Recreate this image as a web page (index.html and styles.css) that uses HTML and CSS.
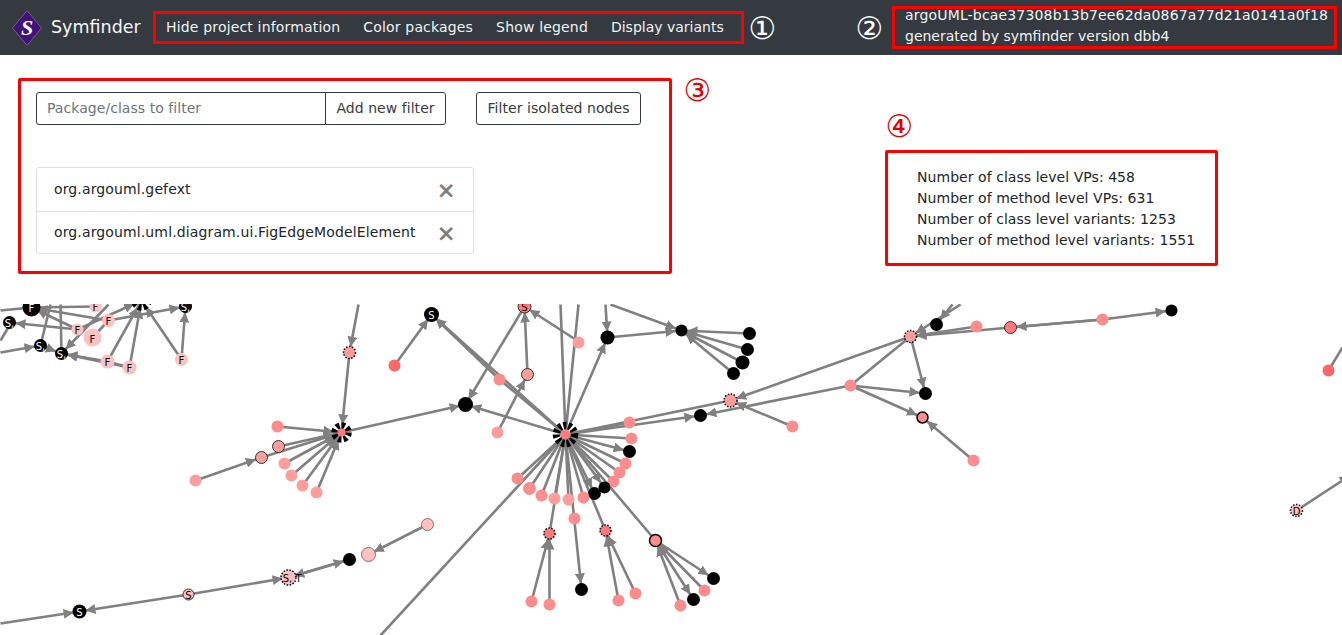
FILE: index.html
```html
<!DOCTYPE html>
<html lang="en">

<head>
  <meta charset="UTF-8">
  <meta name="viewport" content="width=device-width, initial-scale=1.0">
  <title>Symfinder</title>

  <link rel="stylesheet" href="styles.css">
</head>

<body>
  <nav class="navbar">
    <a class="brand" href="#">
      <svg class="logo" width="30" height="36" viewBox="0 0 30 36">
        <polygon points="15,0.5 29.5,18 15,35.5 0.5,18" fill="#43117a" stroke="#6b6480"></polygon>
        <text x="15" y="25" text-anchor="middle" class="logo-s">S</text>
      </svg>
      <span>Symfinder</span>
    </a>
    <ul class="nav-links">
      <li>Hide project information</li>
      <li>Color packages</li>
      <li>Show legend</li>
      <li>Display variants</li>
    </ul>
    <span class="mark mark-one">①</span>
    <span class="mark mark-two">②</span>
    <div class="project-name">
      <span class="project-hash">argoUML-bcae37308b13b7ee62da0867a77d21a0141a0f18</span>
      <span>generated by symfinder version dbb4</span>
    </div>
  </nav>

  <main class="top">
    <section class="filters">
      <div class="filter-form">
        <div class="input-group">
          <input type="text" placeholder="Package/class to filter">
          <button type="button">Add new filter</button>
        </div>
        <button type="button" class="isolated">Filter isolated nodes</button>
      </div>
      <ul class="filter-list">
        <li>org.argouml.gefext <span class="close">×</span></li>
        <li>org.argouml.uml.diagram.ui.FigEdgeModelElement <span class="close">×</span></li>
      </ul>
    </section>
    <span class="mark red mark-three">③</span>
    <div class="stats-col">
      <span class="mark red mark-four">④</span>
      <div class="stats">
        <div>Number of class level VPs: 458</div>
        <div>Number of method level VPs: 631</div>
        <div>Number of class level variants: 1253</div>
        <div>Number of method level variants: 1551</div>
      </div>
    </div>
  </main>

  <svg class="graph" width="1342" height="331" viewBox="-0.5 303.5 1342 331">
    <defs>
      <marker id="a6" markerUnits="userSpaceOnUse" markerWidth="10" markerHeight="10" viewBox="0 -5 10 10" refX="16" refY="0" orient="auto">
        <path d="M0,-5L10,0L0,5z" fill="#808080"></path>
      </marker>
      <marker id="a8" markerUnits="userSpaceOnUse" markerWidth="10" markerHeight="10" viewBox="0 -5 10 10" refX="18" refY="0" orient="auto">
        <path d="M0,-5L10,0L0,5z" fill="#808080"></path>
      </marker>
    </defs>

    <g class="edges">
      <!-- plain links -->
      <line x1="565" y1="434" x2="730" y2="400"></line>
      <line x1="565" y1="434" x2="629" y2="422"></line>
      <line x1="565" y1="434" x2="631" y2="438"></line>
      <line x1="565" y1="434" x2="625" y2="463"></line>
      <line x1="565" y1="434" x2="619" y2="472"></line>
      <line x1="565" y1="434" x2="613" y2="481"></line>
      <line x1="565" y1="434" x2="583" y2="497"></line>
      <line x1="565" y1="434" x2="568" y2="499"></line>
      <line x1="565" y1="434" x2="554" y2="498"></line>
      <line x1="565" y1="434" x2="541" y2="495"></line>
      <line x1="565" y1="434" x2="529" y2="488"></line>
      <line x1="565" y1="434" x2="517" y2="478"></line>
      <line x1="565" y1="434" x2="549" y2="533"></line>
      <line x1="565" y1="434" x2="605" y2="530"></line>
      <line x1="565" y1="434" x2="655" y2="540"></line>
      <line x1="565" y1="434" x2="380" y2="635"></line>
      <line x1="560" y1="304" x2="565" y2="434"></line>
      <line x1="578" y1="304" x2="565" y2="434"></line>
      <line x1="850" y1="385" x2="910" y2="336"></line>
      <line x1="1010" y1="327" x2="1102" y2="319"></line>
      <line x1="499" y1="379" x2="565" y2="434"></line>
      <line x1="1328" y1="370" x2="1342" y2="347"></line>
      <line x1="92" y1="337" x2="108" y2="320"></line>
      <line x1="129" y1="367" x2="107" y2="361"></line>
      <line x1="0" y1="340" x2="9" y2="325"></line>
      <line x1="0" y1="310" x2="31" y2="307"></line>
      <line x1="40" y1="345" x2="50" y2="304"></line>
      <line x1="61" y1="353" x2="60" y2="304"></line>
      <line x1="31" y1="307" x2="95" y2="306"></line>

      <!-- links ending in an arrow -->
      <g marker-end="url(#a6)">
        <line x1="565" y1="434" x2="431" y2="314"></line>
        <line x1="499" y1="379" x2="431" y2="314"></line>
        <line x1="394" y1="365" x2="431" y2="314"></line>
        <line x1="527" y1="374" x2="524" y2="306"></line>
        <line x1="578" y1="341" x2="524" y2="306"></line>
        <line x1="524" y1="306" x2="465" y2="404"></line>
        <line x1="497" y1="432" x2="527" y2="374"></line>
        <line x1="565" y1="434" x2="465" y2="404"></line>
        <line x1="341" y1="432" x2="465" y2="404"></line>
        <line x1="565" y1="434" x2="607" y2="337"></line>
        <line x1="605" y1="304" x2="607" y2="337"></line>
        <line x1="610" y1="304" x2="681" y2="330"></line>
        <line x1="607" y1="337" x2="681" y2="330"></line>
        <line x1="749" y1="333" x2="681" y2="330"></line>
        <line x1="747" y1="349" x2="681" y2="330"></line>
        <line x1="742" y1="362" x2="681" y2="330"></line>
        <line x1="733" y1="373" x2="681" y2="330"></line>
        <line x1="565" y1="434" x2="700" y2="415"></line>
        <line x1="850" y1="385" x2="700" y2="415"></line>
        <line x1="910" y1="336" x2="730" y2="400"></line>
        <line x1="792" y1="426" x2="730" y2="400"></line>
        <line x1="850" y1="385" x2="925" y2="393"></line>
        <line x1="850" y1="385" x2="922" y2="417"></line>
        <line x1="910" y1="336" x2="925" y2="393"></line>
        <line x1="973" y1="460" x2="922" y2="417"></line>
        <line x1="1102" y1="319" x2="1171" y2="310"></line>
        <line x1="1102" y1="319" x2="1010" y2="327"></line>
        <line x1="1010" y1="327" x2="910" y2="336"></line>
        <line x1="976" y1="326" x2="910" y2="336"></line>
        <line x1="960" y1="304" x2="910" y2="336"></line>
        <line x1="952" y1="304" x2="936" y2="324"></line>
        <line x1="565" y1="434" x2="629" y2="451"></line>
        <line x1="565" y1="434" x2="604" y2="487"></line>
        <line x1="565" y1="434" x2="594" y2="493"></line>
        <line x1="565" y1="434" x2="581" y2="589"></line>
        <line x1="531" y1="601" x2="549" y2="533"></line>
        <line x1="549" y1="604" x2="549" y2="533"></line>
        <line x1="618" y1="600" x2="605" y2="530"></line>
        <line x1="635" y1="593" x2="605" y2="530"></line>
        <line x1="655" y1="540" x2="713" y2="578"></line>
        <line x1="655" y1="540" x2="693" y2="599"></line>
        <line x1="704" y1="590" x2="655" y2="540"></line>
        <line x1="680" y1="605" x2="655" y2="540"></line>
        <line x1="427" y1="524" x2="368" y2="554"></line>
        <line x1="288" y1="577" x2="349" y2="559"></line>
        <line x1="349" y1="559" x2="288" y2="577"></line>
        <line x1="188" y1="594" x2="288" y2="577"></line>
        <line x1="188" y1="594" x2="79" y2="611"></line>
        <line x1="0" y1="623" x2="79" y2="611"></line>
        <line x1="195" y1="480" x2="261" y2="457"></line>
        <line x1="358" y1="304" x2="349" y2="352"></line>
        <line x1="1296" y1="510" x2="1354" y2="472"></line>
        <line x1="0" y1="352" x2="40" y2="345"></line>
        <line x1="77" y1="329" x2="9" y2="322"></line>
        <line x1="107" y1="361" x2="61" y2="353"></line>
        <line x1="129" y1="367" x2="61" y2="353"></line>
        <line x1="40" y1="345" x2="61" y2="353"></line>
        <line x1="108" y1="304" x2="61" y2="353"></line>
        <line x1="108" y1="320" x2="185" y2="306"></line>
        <line x1="181" y1="359" x2="185" y2="306"></line>
        <line x1="108" y1="320" x2="31" y2="307"></line>
        <line x1="77" y1="329" x2="31" y2="307"></line>
      </g>

      <g marker-end="url(#a8)">
        <line x1="277" y1="426" x2="341" y2="432"></line>
        <line x1="278" y1="446" x2="341" y2="432"></line>
        <line x1="261" y1="457" x2="341" y2="432"></line>
        <line x1="284" y1="463" x2="341" y2="432"></line>
        <line x1="291" y1="475" x2="341" y2="432"></line>
        <line x1="302" y1="485" x2="341" y2="432"></line>
        <line x1="316" y1="492" x2="341" y2="432"></line>
        <line x1="349" y1="352" x2="341" y2="432"></line>
        <line x1="77" y1="329" x2="141" y2="300"></line>
        <line x1="107" y1="361" x2="141" y2="300"></line>
        <line x1="129" y1="367" x2="141" y2="300"></line>
        <line x1="181" y1="359" x2="141" y2="300"></line>
      </g>
    </g>

    <g class="nodes">
      <!-- center cluster -->
      <circle class="hub" cx="565" cy="434" r="9"></circle>
      <circle class="p4" cx="565" cy="434" r="5"></circle>
      <circle class="k" cx="431" cy="314" r="7.5"></circle>
      <circle class="p4 ring" cx="524" cy="306" r="6.5"></circle>
      <circle class="p5" cx="394" cy="365" r="6"></circle>
      <circle class="p3" cx="499" cy="379" r="6"></circle>
      <circle class="p2 ring" cx="527" cy="374" r="6"></circle>
      <circle class="p2" cx="578" cy="342" r="6"></circle>
      <circle class="k" cx="607" cy="337" r="7"></circle>
      <circle class="k" cx="681" cy="330" r="6"></circle>
      <circle class="k" cx="749" cy="333" r="6.5"></circle>
      <circle class="k" cx="747" cy="349" r="6.5"></circle>
      <circle class="k" cx="742" cy="362" r="7"></circle>
      <circle class="k" cx="733" cy="373" r="6.5"></circle>
      <circle class="k" cx="465" cy="404" r="7.5"></circle>
      <circle class="p2" cx="497" cy="432" r="6"></circle>
      <circle class="p2 dot" cx="730" cy="400" r="6.5"></circle>
      <circle class="k" cx="700" cy="415" r="6.5"></circle>
      <circle class="p3" cx="629" cy="422" r="6"></circle>
      <circle class="p3" cx="631" cy="438" r="6"></circle>
      <circle class="k" cx="629" cy="451" r="6.5"></circle>
      <circle class="p3" cx="625" cy="463" r="6"></circle>
      <circle class="p3" cx="619" cy="472" r="6"></circle>
      <circle class="p3" cx="613" cy="481" r="6"></circle>
      <circle class="k" cx="604" cy="487" r="6"></circle>
      <circle class="k" cx="594" cy="493" r="6.5"></circle>
      <circle class="p3" cx="583" cy="497" r="6"></circle>
      <circle class="p2" cx="568" cy="499" r="6"></circle>
      <circle class="p2" cx="554" cy="498" r="6"></circle>
      <circle class="p3" cx="541" cy="495" r="6"></circle>
      <circle class="p3" cx="529" cy="488" r="6.5"></circle>
      <circle class="p3" cx="517" cy="478" r="6"></circle>
      <circle class="p3" cx="574" cy="518" r="6"></circle>
      <circle class="p4 dot" cx="549" cy="533" r="5.5"></circle>
      <circle class="p4 dot" cx="605" cy="530" r="5.5"></circle>
      <circle class="p3 strong" cx="655" cy="540" r="6"></circle>
      <circle class="k" cx="713" cy="578" r="6.5"></circle>
      <circle class="p3" cx="704" cy="590" r="6"></circle>
      <circle class="k" cx="693" cy="599" r="6.5"></circle>
      <circle class="p3" cx="680" cy="605" r="6"></circle>
      <circle class="k" cx="581" cy="589" r="6.5"></circle>
      <circle class="p3" cx="531" cy="601" r="6"></circle>
      <circle class="p3" cx="549" cy="604" r="6"></circle>
      <circle class="p3" cx="618" cy="600" r="6"></circle>
      <circle class="p3" cx="635" cy="593" r="6"></circle>
      <circle class="p1 ring-soft" cx="427" cy="524" r="6"></circle>
      <circle class="p1 ring-soft" cx="368" cy="554" r="7"></circle>

      <!-- lower left -->
      <circle class="k" cx="79" cy="611" r="7"></circle>
      <circle class="p1 ring" cx="188" cy="594" r="5.5"></circle>
      <circle class="p1 dot" cx="288" cy="577" r="7.5"></circle>
      <circle class="k" cx="349" cy="559" r="6.5"></circle>
      <circle class="p2" cx="195" cy="480" r="6"></circle>
      <circle class="p2 ring" cx="261" cy="457" r="6"></circle>
      <circle class="p2 ring" cx="278" cy="446" r="6"></circle>
      <circle class="p3" cx="277" cy="426" r="6"></circle>
      <circle class="p2" cx="284" cy="463" r="6"></circle>
      <circle class="p2" cx="291" cy="475" r="6"></circle>
      <circle class="p2" cx="302" cy="485" r="6"></circle>
      <circle class="p2" cx="316" cy="492" r="6"></circle>
      <circle class="hub" cx="341" cy="432" r="6.5"></circle>
      <circle class="p4" cx="341" cy="432" r="4"></circle>
      <circle class="p2 dot" cx="349" cy="352" r="6"></circle>

      <!-- upper left -->
      <circle class="k" cx="31" cy="307" r="9"></circle>
      <circle class="k" cx="9" cy="322" r="6.5"></circle>
      <circle class="k" cx="40" cy="345" r="6.5"></circle>
      <circle class="k" cx="61" cy="353" r="6.5"></circle>
      <circle class="p1" cx="95" cy="306" r="6"></circle>
      <circle class="p1" cx="108" cy="320" r="6.5"></circle>
      <circle class="p1" cx="77" cy="329" r="6"></circle>
      <circle class="p1" cx="92" cy="337" r="9"></circle>
      <circle class="p1" cx="107" cy="361" r="7"></circle>
      <circle class="p1" cx="129" cy="367" r="7"></circle>
      <circle class="p1" cx="181" cy="359" r="6.5"></circle>
      <circle class="k" cx="185" cy="306" r="6.5"></circle>
      <circle class="hub" cx="141" cy="300" r="6.5"></circle>

      <!-- right side -->
      <circle class="p2 dot" cx="910" cy="336" r="6"></circle>
      <circle class="k" cx="936" cy="324" r="6.5"></circle>
      <circle class="p3" cx="976" cy="326" r="6"></circle>
      <circle class="p4 ring" cx="1010" cy="327" r="6"></circle>
      <circle class="p3" cx="1102" cy="319" r="6"></circle>
      <circle class="k" cx="1171" cy="310" r="6"></circle>
      <circle class="p3" cx="850" cy="385" r="6"></circle>
      <circle class="k" cx="925" cy="393" r="6.5"></circle>
      <circle class="p3 strong" cx="922" cy="417" r="5.5"></circle>
      <circle class="p3" cx="792" cy="426" r="6"></circle>
      <circle class="p3" cx="973" cy="460" r="6"></circle>
      <circle class="p5" cx="1328" cy="370" r="6"></circle>
      <circle class="p1 dot" cx="1296" cy="510" r="6"></circle>
    </g>

    <g class="labels">
      <text class="light" x="431" y="318">S</text>
      <text x="524" y="310">S</text>
      <text class="light" x="79" y="615">S</text>
      <text x="188" y="598">S</text>
      <text x="287" y="581">S,</text>
      <text x="298" y="581">T</text>
      <text class="light" x="31" y="311">F</text>
      <text class="light" x="9" y="326">S,</text>
      <text class="light" x="40" y="349">S,</text>
      <text class="light" x="61" y="357">S,</text>
      <text class="light" x="185" y="310">S,</text>
      <text x="95" y="310">F</text>
      <text x="108" y="324">F</text>
      <text x="77" y="333">F</text>
      <text x="92" y="342">F</text>
      <text x="107" y="365">F</text>
      <text x="129" y="371">F</text>
      <text x="181" y="363">F</text>
      <text x="1296" y="514">D</text>
    </g>
  </svg>
</body>

</html>
```

FILE: styles.css
```css
* {
  box-sizing: border-box;
}

html,body {
  margin: 0;
  height: 635px;
  overflow: hidden;
}

body {
  background-color: #fff;
  color: #212529;
  font-family: "DejaVu Sans", sans-serif;
  font-size: 14px;
  line-height: 21px;
}

ul {
  list-style: none;
  margin: 0;
  padding: 0;
}

.navbar {
  display: flex;
  align-items: center;
  height: 55px;
  background-color: #343a40;
  color: #f2f3f4;
}

.brand {
  display: flex;
  align-items: center;
  width: 153px;
  padding-left: 12px;
  color: #f8f9fa;
  font-size: 17.5px;
  text-decoration: none;
}

.logo {
  margin-right: 9px;
}

.logo-s {
  fill: #fff;
  font-family: "Liberation Serif", serif;
  font-size: 22px;
  font-style: italic;
  font-weight: bold;
}

.nav-links {
  display: flex;
  gap: 23px;
  width: 591px;
  height: 33px;
  align-items: center;
  padding: 0 10px;
  border: 3px solid #f00;
  letter-spacing: 0.17px;
}

.nav-links li:last-child {
  letter-spacing: 0;
}

.mark {
  width: 29px;
  color: #fff;
  font-size: 31px;
  line-height: 32px;
  text-align: center;
}

.red {
  color: #e60000;
}

.mark-one {
  margin-left: 4px;
}

.mark-two {
  margin-left: 78px;
}

.project-name {
  display: flex;
  flex-direction: column;
  justify-content: center;
  width: 445px;
  height: 43px;
  margin-left: 8px;
  margin-bottom: 1px;
  padding: 0 10px 3px;
  border: 3px solid #f00;
  white-space: nowrap;
}

.project-hash {
  letter-spacing: 0.17px;
}

.top {
  display: flex;
  height: 249px;
  padding: 23px 0 0 18px;
}

.filters {
  width: 654px;
  height: 196px;
  padding: 11px 15px;
  border: 3px solid #f00;
  border-radius: 2px;
}

.filter-form {
  display: flex;
  gap: 30px;
}

.input-group {
  display: flex;
  width: 410px;
  height: 33px;
}

input,button {
  height: 33px;
  padding-bottom: 2px;
  border: 1px solid #343a40;
  background-color: #fff;
  color: #343a40;
  font-family: inherit;
  font-size: 14px;
  letter-spacing: 0.05px;
}

input {
  width: 290px;
  padding-left: 10px;
  padding-right: 10px;
  border-radius: 3px 0 0 3px;
}

input::placeholder {
  color: #6c757d;
}

.input-group button {
  width: 121px;
  margin-left: -1px;
  padding-left: 0;
  padding-right: 0;
  border-radius: 0 3px 3px 0;
}

.isolated {
  width: 165px;
  padding-left: 0;
  padding-right: 0;
  border-radius: 3px;
}

.filter-list {
  width: 438px;
  margin-top: 42px;
  border: 1px solid #dfdfdf;
  border-radius: 3px;
  letter-spacing: 0.13px;
}

.filter-list li {
  display: flex;
  justify-content: space-between;
  align-items: center;
  height: 43px;
  padding: 0 20px 0 17px;
}

.filter-list li + li {
  height: 42px;
  border-top: 1px solid #dfdfdf;
}

.close {
  margin-right: -3px;
  color: #7f7f7f;
  font-size: 23px;
  font-weight: bold;
  transform: translateY(1px);
}

.mark-three {
  margin: -4px 0 0 11px;
  height: 32px;
}

.stats-col {
  display: flex;
  flex-direction: column;
  margin: 32px 0 0 173px;
}

.mark-four {
  margin-bottom: 8px;
}

.stats {
  width: 333px;
  height: 116px;
  padding: 14px 0 0 29px;
  border: 3px solid #f00;
  border-radius: 2px;
  letter-spacing: 0.05px;
}

.graph {
  display: block;
}

.edges line {
  stroke: #808080;
  stroke-width: 2.6;
}

.k {
  fill: #000;
}

.p1 {
  fill: #ffc0c0;
}

.p2 {
  fill: #ff9d9d;
}

.p3 {
  fill: #ff8c8c;
}

.p4 {
  fill: #ff7a7a;
}

.p5 {
  fill: #ff6666;
}

.hub {
  fill: none;
  stroke: #000;
  stroke-width: 7.5;
  stroke-dasharray: 3 2;
}

.ring {
  stroke: #333;
  stroke-width: 1;
}

.ring-soft {
  stroke: #8a7070;
  stroke-width: 1;
}

.strong {
  stroke: #000;
  stroke-width: 1.5;
}

.dot {
  stroke: #000;
  stroke-width: 1.5;
  stroke-dasharray: 1.5 1.5;
}

.labels text {
  fill: #000;
  font-size: 10px;
  text-anchor: middle;
}

.labels .light {
  fill: #fff;
}
```
